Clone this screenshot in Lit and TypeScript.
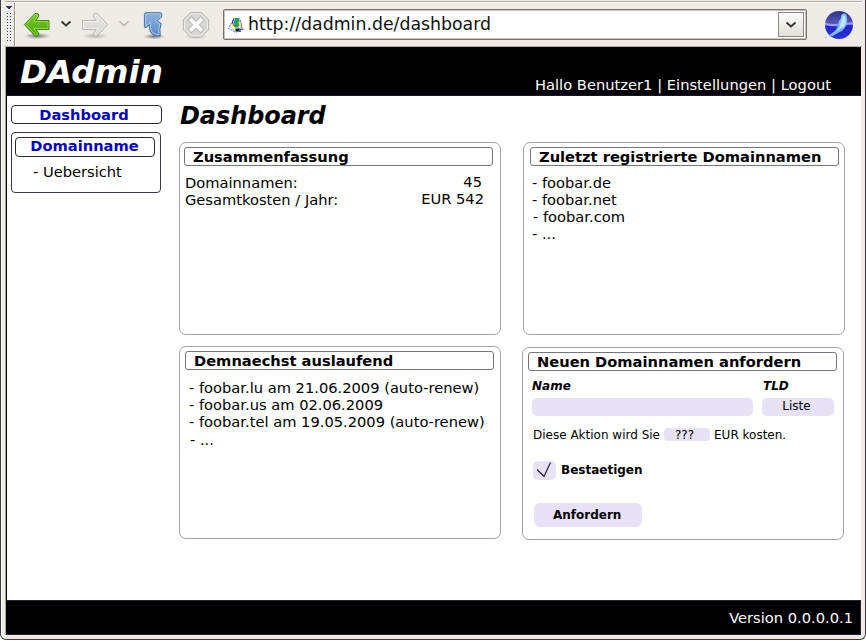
import { LitElement, html, css } from "lit";
import { customElement } from "lit/decorators.js";

@customElement("browser-toolbar")
class BrowserToolbar extends LitElement {
  static styles = css`
    :host { display: flex; align-items: flex-start; height: 45px; box-sizing: border-box; background: #efebe7; border-top: 1px solid #fff; border-bottom: 1px solid #b5a99a; }
    .grip { width: 8px; height: 38px; margin-left: 1px; margin-top: 2px; flex: none; }
    .edge { width: 1px; height: 43px; background: #9c9082; border-right: 1px solid #fff; flex: none; }
    .icons { width: 208px; height: 43px; margin-left: -1px; flex: none; }
    .field { box-sizing: border-box; display: flex; width: 584px; height: 31px; margin-top: 6px; padding: 2px; border: 1px solid #7b7268; border-radius: 2px; background: #fff; box-shadow: inset 0 0 0 1px #c9c4be; }
    .fav { width: 16px; height: 16px; margin: 5px 0 0 2px; flex: none; }
    .url { font: 17.33px/25px "DejaVu Sans", sans-serif; color: #111; margin-left: 4px; flex: 1; white-space: nowrap; }
    .drop { box-sizing: border-box; width: 26px; height: 25px; border: 1px solid #8d857d; background: linear-gradient(#fbfaf9, #e5e0db); display: flex; align-items: center; justify-content: center; }
    .logo { width: 30px; height: 30px; margin: 7px 0 0 17px; flex: none; }
  `;
  render() {
    return html`
      <svg class="grip" viewBox="7 5 8 38">
        <path d="M7 6h6v1h-1v1h-1v1h-2v-1h-1v-1h-1z" fill="#33386e" />
        <path d="M8.5 13v30M11.5 13v30" stroke="#33386e" stroke-dasharray="1 2" />
      </svg>
      <div class="edge"></div>
      <svg class="icons" viewBox="15 3 208 43">
        <defs>
          <radialGradient id="sh"><stop offset="0" stop-color="#000" stop-opacity=".5" /><stop offset="1" stop-color="#000" stop-opacity="0" /></radialGradient>
          <linearGradient id="gr" x2="0" y2="1"><stop offset="0" stop-color="#7ac82c" /><stop offset="1" stop-color="#4aaa05" /></linearGradient>
          <linearGradient id="gy" x2="0" y2="1"><stop offset="0" stop-color="#e9e8e6" /><stop offset="1" stop-color="#d5d4d2" /></linearGradient>
          <linearGradient id="bl" x2="0" y2="1"><stop offset="0" stop-color="#8db3dd" /><stop offset="1" stop-color="#5b8cc4" /></linearGradient>
        </defs>
        <ellipse cx="37" cy="36" rx="13" ry="3.2" fill="url(#sh)" />
        <path d="M24.3 24.6 34.8 13.7q2.2-1.2 3.5.3 1 1.5 0 3.2L35.7 20.5H49v9H35.7l2.6 3q1.2 2-.2 3.3-1.5 1-3.3-.3z" fill="url(#gr)" stroke="#3d8608" stroke-linejoin="round" />
        <path d="M25.9 24.6 35.4 14.9q1.3-.6 1.9.1.5.9-.2 1.7L33.6 21.5H48v7H33.6l3.5 4.500q.7 1.100 0 1.800-.8.500-1.700-.2z" fill="none" stroke="#9be052" stroke-width=".8" />
        <path d="m61.500 21.500 4.500 4 4.500-4" fill="none" stroke="#333" stroke-width="1.800" />
        <ellipse cx="95" cy="36" rx="13" ry="3.200" fill="url(#sh)" opacity=".5" />
        <path d="M107.700 24.600 97.200 13.700q-2.200-1.200-3.500.3-1 1.500 0 3.200l2.600 3.300H82.500v9h13.800l-2.600 3q-1.200 2 .2 3.300 1.500 1 3.300-.3z" fill="url(#gy)" stroke="#b5b3b0" stroke-linejoin="round" />
        <path d="M106.200 24.600 96.600 14.900q-1.300-.6-1.900.1-.5.9.2 1.700l3.500 4.800H83.500v7h14.900L94.900 33q-.7 1.100 0 1.800.8.500 1.700-.2z" fill="none" stroke="#f6f5f4" stroke-width=".8" />
        <path d="m119.500 21.500 4.500 4 4.500-4" fill="none" stroke="#bdb0a5" stroke-width="1.600" />
        <ellipse cx="154" cy="36.500" rx="11" ry="2.800" fill="url(#sh)" />
        <path d="M146 12.700H160q2 0 1.900 2.300-.2 2.600-2 3.700l-2.900 2q1.800 1.800 4.200 2.800-2 5.500-1 12.500-9.700.5-10.700-7.500-.3-2 0-4l-3.200 3q-1.700.8-1.900-1V14.500q.2-1.700 1.600-1.800z" fill="url(#bl)" stroke="#3f6fa8" stroke-linejoin="round" />
        <path d="M146.300 13.800H159.500q1.300 0 1.300 1.300-.2 1.900-1.600 2.800l-3.700 2.600q1.500 2.300 4.200 3.700-1.500 4.500-.7 10.700-7.500-.2-8.400-6.800-.3-2.800.2-6.300l-5.300 4.200V14.800q0-.9.800-1z" fill="none" stroke="#b7d1ec" stroke-width=".8" />
        <ellipse cx="196" cy="36.500" rx="12" ry="2.800" fill="url(#sh)" opacity=".45" />
        <path d="M190.700 12.500h10.600l7.400 7.300v10l-7.400 7.200h-10.600l-7.400-7.200v-10z" fill="#d7d6d4" stroke="#b4b2af" />
        <path d="M191.200 13.700h9.600l6.700 6.600v9l-6.700 6.500h-9.600l-6.700-6.500v-9z" fill="none" stroke="#eeedeb" />
        <path d="m191.500 20.300 9 9m0-9-9 9" stroke="#b7b5b3" stroke-width="5.600" stroke-linecap="square" />
        <path d="m191.500 20.300 9 9m0-9-9 9" stroke="#fafafa" stroke-width="3.800" stroke-linecap="square" />
      </svg>
      <div class="field">
        <svg class="fav" viewBox="0 0 16 16">
          <path d="M5 3 0.500 11.500 8 15.500 12 13z" fill="#dfe4fb" stroke="#7a7ed6" stroke-dasharray="2 1" />
          <path d="M5 5 3 10l5 4 1-5z" fill="#f2ee30" />
          <path d="m4 6 5 8M3 9l4 4" stroke="#fff" />
          <path d="m7 1h4.500v8.500H9.500L8 11 5 8.500z" fill="#2e9a6a" />
          <path d="m6 1-2 6" stroke="#2a318e" />
          <path d="m11 5 2 6" stroke="#eee93a" stroke-width="1.500" />
          <path d="m12.500 3 1.500 8" stroke="#6a6fca" />
          <path d="M7.500 11.500h3.500v3H7.500z" fill="#181818" />
          <path d="M11 11.500h4.500V13H13v2h-2z" fill="#555ab5" />
        </svg>
        <div class="url">http://dadmin.de/dashboard</div>
        <div class="drop">
          <svg width="12" height="8" viewBox="0 0 12 8"><path d="m1.500 1.500 4.500 4 4.500-4" fill="none" stroke="#333" stroke-width="1.800" /></svg>
        </div>
      </div>
      <svg class="logo" viewBox="0 0 30 30">
        <defs>
          <linearGradient id="sk" x2="0" y2="1"><stop offset="0" stop-color="#30308c" /><stop offset=".45" stop-color="#5759ba" /><stop offset=".55" stop-color="#2424cc" /><stop offset="1" stop-color="#2d30e2" /></linearGradient>
        </defs>
        <circle cx="15" cy="15" r="14" fill="url(#sk)" />
        <path d="M1 12.500q7 2.500 14 1t14-1v2q-7-.5-13 1.500-8 1-15-1z" fill="#9b9cf2" />
        <path d="M17 6q.5-2.300 3-2.500 3 .3 2.900 4 1.200 6.500-2.700 11-2.500 3.500-6.500 4.500l-5 3-4-.5 5.500-4q3.500-2.500 4-7 .3-4 2.800-6.500z" fill="#7fc0f7" />
        <path d="M18.500 5.500q3 0 3.200 4 .3 6-3.700 9-3 2-5 2.500 3-3 3.300-6.500.2-4 2.200-6z" fill="#c2e4fc" />
        <path d="m14.500 21 4-3M12 20l3-5" stroke="#579fe4" />
        <path d="M1 27.500h2" stroke="#7fc0f7" />
      </svg>
    `;
  }
}

@customElement("side-nav")
class SideNav extends LitElement {
  static styles = css`
    :host { display: block; width: 151px; font: 14.67px/18px "DejaVu Sans", sans-serif; }
    .box { box-sizing: border-box; border: 1px solid #2c2838; border-radius: 4px; background: #fff; }
    .link { color: #0000c4; font-weight: bold; text-align: center; white-space: nowrap; }
    .top { height: 19px; padding-right: 5px; line-height: 17px; }
    .group { width: 150px; height: 61px; margin-top: 8px; padding: 4px 0 0 3px; border-color: #3c3848; }
    .head { width: 140px; height: 20px; padding-right: 1px; line-height: 16px; }
    .sub { padding-left: 18px; margin-top: 6px; }
  `;
  render() {
    return html`
      <div class="box link top">Dashboard</div>
      <div class="box group">
        <div class="box link head">Domainname</div>
        <div class="sub">- Uebersicht</div>
      </div>
    `;
  }
}

@customElement("panel-card")
class PanelCard extends LitElement {
  static properties = { heading: {} };
  declare heading: string;
  static styles = css`
    :host { display: block; box-sizing: border-box; width: 322px; height: 193px; border: 1px solid #a3a3a7; border-radius: 7px; padding-top: 4px; padding-left: 4px; }
    .title { box-sizing: border-box; width: 309px; height: 19px; margin-bottom: 1px; margin-left: var(--title-x, 0); padding-left: var(--title-pad, 8px); border: 1px solid #77757f; border-radius: 3px; font: bold 14.67px/18px "DejaVu Sans", sans-serif; white-space: nowrap; }
  `;
  render() {
    return html`<div class="title">${this.heading}</div><slot></slot>`;
  }
}

@customElement("order-form")
class OrderForm extends LitElement {
  static styles = css`
    :host { display: block; padding: 6px 0 0 5px; font: 12px/16px "DejaVu Sans", sans-serif; }
    .row { display: flex; white-space: nowrap; }
    .pill { background: #e7e2f6; border-radius: 5px; box-sizing: border-box; }
    .labels { font-weight: bold; font-style: oblique; }
    .name { width: 231px; }
    .inputs { margin-top: 4px; gap: 9px; }
    .input { width: 221px; height: 18px; }
    .list { width: 72px; height: 18px; line-height: 17px; text-align: center; padding-right: 3px; }
    .cost { margin-top: 12px; padding-left: 1px; line-height: 14px; }
    .price { width: 46px; height: 13px; line-height: 14px; margin: 0 4px 0 4px; border-radius: 4px; text-align: center; padding-right: 5px; }
    .confirm { margin: 19px 0 0 1px; gap: 5px; font-weight: bold; line-height: 18px; }
    .check { width: 23px; height: 19px; display: block; }
    .submit { width: 108px; height: 24px; margin: 23px 0 0 2px; line-height: 24px; font-weight: bold; padding-left: 19px; border-radius: 6px; }
  `;
  render() {
    return html`
      <div class="row labels"><span class="name">Name</span><span>TLD</span></div>
      <div class="row inputs"><div class="pill input"></div><div class="pill list">Liste</div></div>
      <div class="row cost">Diese Aktion wird Sie<span class="pill price">???</span>EUR kosten.</div>
      <div class="row confirm">
        <svg class="pill check" viewBox="0 0 23 19"><path d="m4 8.500 7 7 6.500-14" fill="none" stroke="#1b1924" stroke-width="1.100" /></svg>
        <span>Bestaetigen</span>
      </div>
      <div class="pill submit">Anfordern</div>
    `;
  }
}

@customElement("app-root")
class AppRoot extends LitElement {
  static styles = css`
    :host { display: block; width: 866px; height: 641px; overflow: hidden; background: #fff; color: #000; font: 14.67px/17.33px "DejaVu Sans", sans-serif; }
    .window { box-sizing: border-box; display: flex; flex-direction: column; height: 640px; border: 1px solid #3e383a; border-top: 0; border-radius: 0 0 6px 6px; background: #efebe7; padding: 0 3px 4px 4px; box-shadow: inset 1px 0 #fff; }
    .titleline { height: 2px; box-sizing: border-box; background: #efebe7; border-bottom: 1px solid #b5a99a; flex: none; }
    .page { flex: 1; display: flex; flex-direction: column; background: #fff; border-left: 1px solid #b5a99a; margin-right: 1px; }
    .view { flex: 1; display: flex; flex-direction: column; border-left: 1px solid #000; }
    .header { box-sizing: border-box; height: 49px; background: #000; color: #fff; display: flex; justify-content: space-between; border-bottom: 1px solid #16132e; padding: 0 30px 0 13px; white-space: nowrap; }
    .brand { font: oblique bold 32.6px/50px "DejaVu Sans", sans-serif; height: 48px; }
    .user { padding-top: 29px; line-height: 18px; letter-spacing: .02px; }
    .body { flex: 1; display: flex; padding: 1px 0 0 4px; }
    .nav { margin-top: 8px; flex: none; }
    .main { padding-left: 17px; }
    .h1 { margin: 4px 0 0 1px; font: oblique bold 24px/30px "DejaVu Sans", sans-serif; letter-spacing: -.08px; }
    .grid { display: grid; grid-template-columns: 322px 322px; column-gap: 22px; row-gap: 11px; margin-top: 11px; }
    .recent { --title-x: 2px; --title-pad: 8px; }
    .expiring { --title-x: 1px; }
    .low { margin: 1px 0 0 -1px; --title-x: 1px; }
    .sum { display: flex; justify-content: space-between; padding: 7px 16px 0 1px; line-height: 17.4px; white-space: nowrap; }
    .vals { text-align: right; line-height: 17px; margin-top: -1px; }
    .v1 { padding-right: 2px; }
    .list { padding: 6.5px 0 0 4px; white-space: nowrap; }
    .late { padding: 8px 0 0 5px; line-height: 17.2px; }
    .shift { padding-left: 1px; }
    .footer { box-sizing: border-box; height: 35px; background: #000; color: #fff; border: 1px solid #24203c; border-left: 0; text-align: right; line-height: 33px; padding-right: 7px; }
  `;
  render() {
    return html`
      <div class="window">
        <div class="titleline"></div>
        <browser-toolbar></browser-toolbar>
        <div class="page"><div class="view">
          <div class="header">
            <div class="brand">DAdmin</div>
            <div class="user">Hallo Benutzer1 | Einstellungen | Logout</div>
          </div>
          <div class="body">
            <side-nav class="nav"></side-nav>
            <div class="main">
              <div class="h1">Dashboard</div>
              <div class="grid">
                <panel-card heading="Zusammenfassung">
                  <div class="sum">
                    <div><div>Domainnamen:</div><div>Gesamtkosten / Jahr:</div></div>
                    <div class="vals"><div class="v1">45</div><div>EUR 542</div></div>
                  </div>
                </panel-card>
                <panel-card class="recent" heading="Zuletzt registrierte Domainnamen">
                  <div class="list">
                    <div>- foobar.de</div><div>- foobar.net</div><div class="shift">- foobar.com</div><div>- ...</div>
                  </div>
                </panel-card>
                <panel-card class="expiring" heading="Demnaechst auslaufend">
                  <div class="list late">
                    <div>- foobar.lu am 21.06.2009 (auto-renew)</div>
                    <div>- foobar.us am 02.06.2009</div>
                    <div>- foobar.tel am 19.05.2009 (auto-renew)</div>
                    <div class="shift">- ...</div>
                  </div>
                </panel-card>
                <panel-card class="low" heading="Neuen Domainnamen anfordern"><order-form></order-form></panel-card>
              </div>
            </div>
          </div>
          <div class="footer">Version 0.0.0.0.1</div>
        </div></div>
      </div>
    `;
  }
}
